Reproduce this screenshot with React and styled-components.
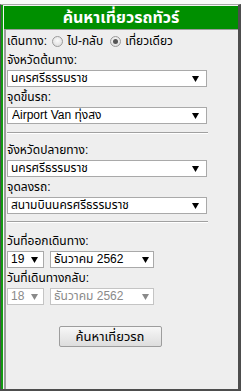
import React from "react"
import styled, { createGlobalStyle } from "styled-components"

const font = `Tahoma, "Liberation Sans", "Noto Sans Thai", "Noto Sans", "DejaVu Sans", sans-serif`

const GlobalStyle = createGlobalStyle`
  html, body {
    margin: 0;
    padding: 0;
    background: #fafafa;
  }

  body {
    font-family: ${font};
    font-size: 12px;
    color: #000;
  }
`

const Frame = styled.div`
  box-sizing: border-box;
  width: 241px;
  height: 391px;
  padding-top: 4px;
  display: flex;
  flex-direction: column;
`

const Window = styled.div`
  flex: 1;
  display: flex;
  border-top: 1px solid #a8a8a8;
  border-left: 1px solid #4d4d4d;
  border-right: 3px solid #4d4d4d;
  border-bottom: 2px solid #4d4d4d;
`

const Shell = styled.div`
  flex: 1;
  display: flex;
  flex-direction: column;
  border-left: 2px solid #119911;
  padding: 1px 0 0 1px;
  background: #f4f4f4;
`

const Header = styled.h1`
  margin: 0;
  height: 23px;
  background: #008f00;
  color: #fff;
  font-family: ${font};
  font-size: 16px;
  font-weight: bold;
  line-height: 23px;
  text-align: center;
`

const Body = styled.div`
  flex: 1;
  border-top: 1px solid #9c9c9c;
  border-left: 2px solid #9c9c9c;
  background: #eeeeee;
  padding: 2px 0 0 1px;
`

const Form = styled.form`
  width: 200px;
  display: flex;
  flex-direction: column;
`

const RadioRow = styled.div`
  height: 18px;
  display: flex;
  align-items: center;
  white-space: nowrap;
`

const Radio = styled.input.attrs({ type: "radio" })`
  appearance: none;
  box-sizing: border-box;
  width: 11px;
  height: 11px;
  margin: 0 4px 0 ${(p) => p.$gap || 5}px;
  border: 1px solid #9a9a9a;
  border-radius: 50%;
  background: radial-gradient(circle at 50% 40%, #fafafa, #d8d8d8);
  display: grid;
  place-items: center;

  &:checked::after {
    content: "";
    width: 5px;
    height: 5px;
    border-radius: 50%;
    background: #555;
  }
`

const Label = styled.div`
  height: 20px;
  line-height: 20px;
  white-space: nowrap;
`

const SelectBox = styled.div`
  position: relative;
  width: ${(p) => p.$width || 200}px;
  height: 17px;
`

const Select = styled.select`
  appearance: none;
  box-sizing: border-box;
  width: 100%;
  height: 100%;
  margin: 0;
  padding: 0 0 0 ${(p) => p.$pad || 3}px;
  border: 1px solid ${(p) => (p.disabled ? "#c4c4c4" : "#a9a9a9")};
  border-radius: 0;
  background: #fff;
  color: ${(p) => (p.disabled ? "#8a8a8a" : "#000")};
  font-family: ${font};
  font-size: 12px;
  line-height: 15px;
  outline: none;
  opacity: 1;
`

const Arrow = styled.svg`
  position: absolute;
  top: 6px;
  right: ${(p) => p.$right || 7}px;
  width: 7px;
  height: 6px;
  pointer-events: none;
  fill: ${(p) => (p.$disabled ? "#8a8a8a" : "#000")};
`

const Divider = styled.hr`
  width: 201px;
  margin: ${(p) => p.$top || 8}px 0 ${(p) => p.$bottom || 6}px;
  border: 0;
  border-top: 1px solid #a0a0a0;
  border-bottom: 1px solid #fff;
`

const DateRow = styled.div`
  display: flex;
  gap: 6px;
`

const ButtonRow = styled.div`
  display: flex;
  justify-content: center;
  padding: 21px 0 0 6px;
`

const Button = styled.button`
  box-sizing: border-box;
  width: 103px;
  height: 21px;
  padding: 0;
  border: 1px solid #9d9d9d;
  border-radius: 2px;
  background: linear-gradient(#f7f7f7, #dddddd);
  color: #000;
  font-family: ${font};
  font-size: 13px;
`

const Dropdown = ({ value, width, pad, right, disabled }) => (
  <SelectBox $width={width}>
    <Select defaultValue={value} $pad={pad} disabled={disabled}>
      <option value={value}>{value}</option>
    </Select>
    <Arrow viewBox="0 0 7 6" $right={right} $disabled={disabled}>
      <polygon points="0,0 7,0 3.5,6" />
    </Arrow>
  </SelectBox>
)

const App = () => (
  <Frame>
    <GlobalStyle />
    <Window>
      <Shell>
        <Header>ค้นหาเที่ยวรถทัวร์</Header>
        <Body>
          <Form onSubmit={(e) => e.preventDefault()}>
            <RadioRow>
              เดินทาง:
              <Radio name="trip" />
              ไป-กลับ
              <Radio name="trip" defaultChecked $gap={7} />
              เที่ยวเดียว
            </RadioRow>

            <Label>จังหวัดต้นทาง:</Label>
            <Dropdown value="นครศรีธรรมราช" right={8} />
            <Label>จุดขึ้นรถ:</Label>
            <Dropdown value="Airport Van ทุ่งสง" pad={4} right={8} />

            <Divider $top={8} $bottom={6} />

            <Label>จังหวัดปลายทาง:</Label>
            <Dropdown value="นครศรีธรรมราช" right={8} />
            <Label>จุดลงรถ:</Label>
            <Dropdown value="สนามบินนครศรีธรรมราช" right={8} />

            <Divider $top={7} $bottom={8} />

            <Label>วันที่ออกเดินทาง:</Label>
            <DateRow>
              <Dropdown value="19" width={37} right={6} />
              <Dropdown value="ธันวาคม 2562" width={104} right={5} />
            </DateRow>
            <Label>วันที่เดินทางกลับ:</Label>
            <DateRow>
              <Dropdown value="18" width={37} right={6} disabled />
              <Dropdown value="ธันวาคม 2562" width={104} right={5} disabled />
            </DateRow>

            <ButtonRow>
              <Button type="submit">ค้นหาเที่ยวรถ</Button>
            </ButtonRow>
          </Form>
        </Body>
      </Shell>
    </Window>
  </Frame>
)

export default App
